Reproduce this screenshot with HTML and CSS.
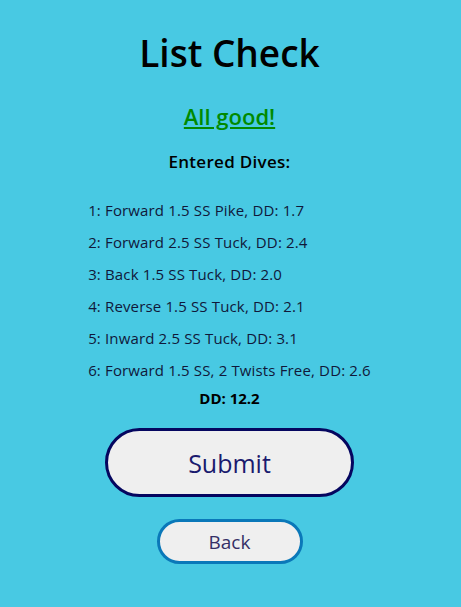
FILE: index.html
```html
<!DOCTYPE html>
<html>
<head>
<meta charset="utf-8">
<link rel="stylesheet" href="styles.css">
</head>
<body>
<main class="page">
  <h1 class="title">List Check</h1>
  <a class="status" href="#">All good!</a>
  <h2 class="subtitle">Entered Dives:</h2>
  <ul class="dives">
    <li>1: Forward 1.5 SS Pike, DD: 1.7</li>
    <li>2: Forward 2.5 SS Tuck, DD: 2.4</li>
    <li>3: Back 1.5 SS Tuck, DD: 2.0</li>
    <li>4: Reverse 1.5 SS Tuck, DD: 2.1</li>
    <li>5: Inward 2.5 SS Tuck, DD: 3.1</li>
    <li>6: Forward 1.5 SS, 2 Twists Free, DD: 2.6</li>
  </ul>
  <p class="total">DD: 12.2</p>
  <button class="btn btn-submit">Submit</button>
  <button class="btn btn-back">Back</button>
</main>
</body>
</html>
```
FILE: styles.css
```css
html, body {
  margin: 0;
  padding: 0;
  background: #48c9e3;
}
body {
  font-family: "Open Sans", "DejaVu Sans", sans-serif;
  color: #000;
}
.page {
  display: flex;
  flex-direction: column;
  align-items: center;
  padding: 30px 2px 0 0;
}
.title {
  margin: 0;
  font-size: 37px;
  font-weight: 600;
  line-height: 46px;
}
.status {
  margin-top: 26px;
  font-size: 22px;
  font-weight: 600;
  color: #008a00;
  line-height: 28px;
}
.subtitle {
  margin: 21px 0 0;
  font-size: 17px;
  font-weight: 600;
  line-height: 22px;
  letter-spacing: 0.3px;
}
.dives {
  list-style: none;
  margin: 21px 0 0;
  padding: 0;
  font-size: 15px;
  letter-spacing: 0.15px;
  color: #10183a;
}
.dives li {
  line-height: 20px;
  padding: 6px 0;
}
.total {
  margin: 2px 0 0;
  font-size: 15px;
  font-weight: 700;
  line-height: 20px;
}
.btn {
  font-family: inherit;
  background: #efefef;
  cursor: pointer;
}
.btn-submit {
  margin-top: 20px;
  width: 249px;
  height: 69px;
  border: 3px solid #05065f;
  border-radius: 35px;
  font-size: 25px;
  color: #1a1a6e;
}
.btn-back {
  margin-top: 22px;
  width: 146px;
  height: 45px;
  border: 3px solid #0a78b9;
  border-radius: 23px;
  font-size: 19px;
  color: #352f66;
}
```
